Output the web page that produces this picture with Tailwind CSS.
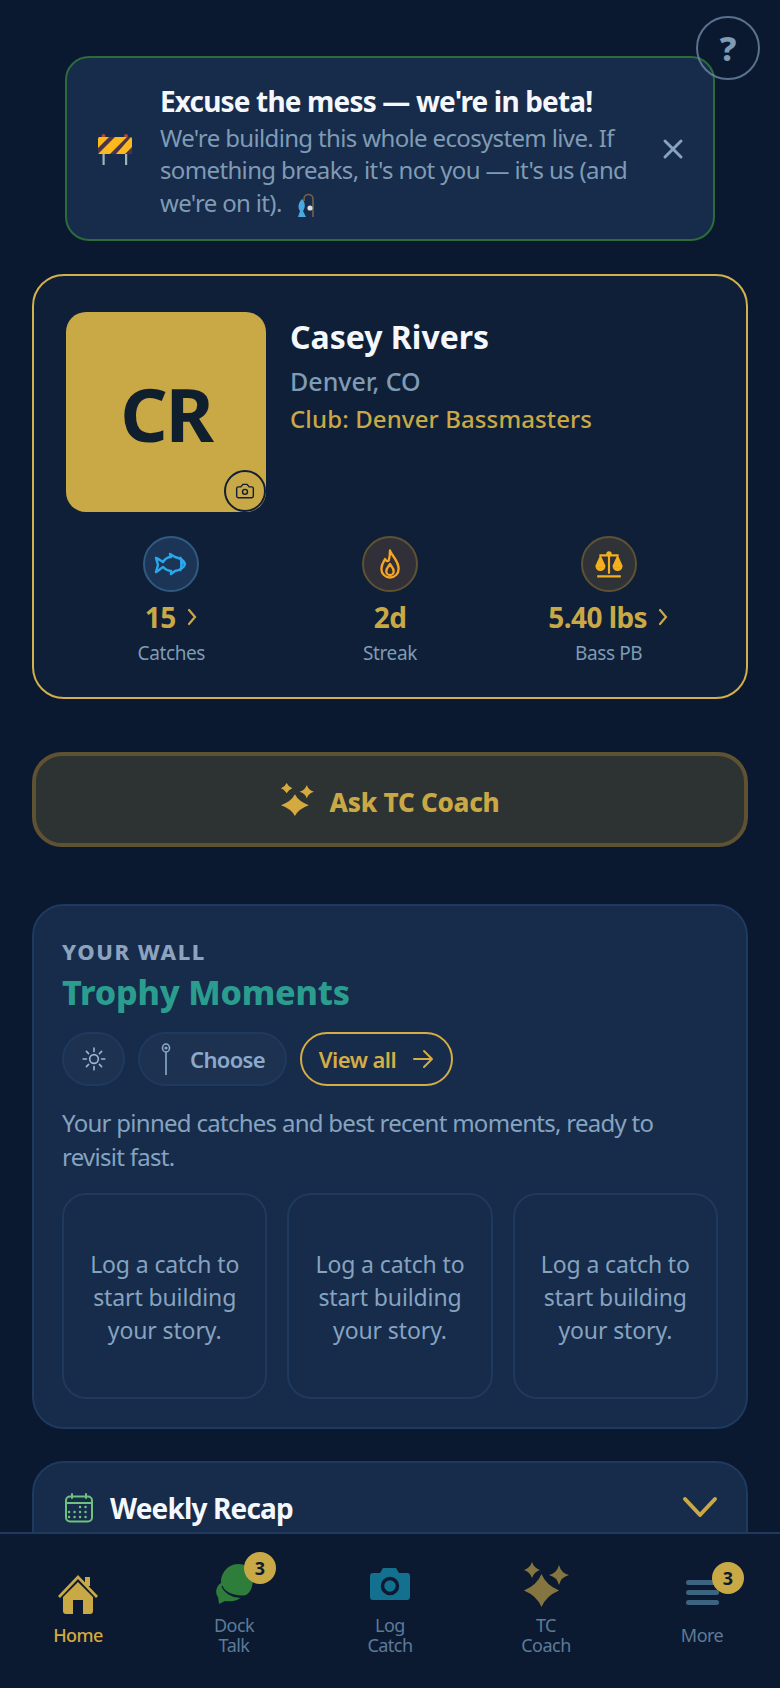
<!DOCTYPE html>
<html lang="en">
<head>
<meta charset="utf-8">
<script src="https://cdn.jsdelivr.net/npm/@tailwindcss/browser@4"></script>
</head>
<body class="bg-[#0a1930] font-['Noto_Sans',sans-serif]">
<div class="relative w-[780px] h-[1688px] overflow-hidden bg-[#0a1930]">
  <button class="absolute left-[696px] top-[16px] z-10 w-[64px] h-[64px] rounded-full border-2 border-[#6b8aa5]/80 flex items-center justify-center text-[34px] font-extrabold text-[#7f9bb5]">?</button>

  <main class="px-8 pt-14">
    <section class="mx-[33px] h-[185px] rounded-[24px] border-2 border-[#2e6b3a] bg-[#172b4a] flex items-center pl-[31px] pr-[28px]">
      <svg class="w-[34px] h-[32px] shrink-0" viewBox="0 0 34 32">
        <circle cx="5.500" cy="3" r="2" fill="#b5472a"/><circle cx="28" cy="3" r="2" fill="#b5472a"/>
        <rect x="4.500" y="18" width="2.200" height="14" fill="#9db4bf"/><rect x="27" y="18" width="2.200" height="14" fill="#9db4bf"/>
        <rect x="0" y="4" width="34" height="17" rx="1.500" fill="#fbb81f"/>
        <path d="M0 15 11 4h6L0 21zM12 21 29 4h4L18 21zM27 21l7-7v7z" fill="#4d3344"/>
      </svg>
      <div class="ml-[28px] flex-1 pt-[4px]">
        <h2 class="text-[28px] leading-[38px] font-bold text-[#f4f8fc] tracking-[-0.03em]">Excuse the mess — we're in beta!</h2>
        <p class="mt-[2px] text-[24px] leading-[32.500px] text-[#7f9bb5] tracking-[-0.027em]">We're building this whole ecosystem live. If something breaks, it's not you — it's us (and we're on it).<svg class="inline-block w-[18px] h-[24px] align-middle ml-[14px]" viewBox="0 0 18 24">
            <path d="M8 8V6c0-6 9-6 9 0v18" fill="none" stroke="#75604a" stroke-width="1.600"/>
            <path d="M6 6c3 3 4 8 1 12l3 6H2l2-6C1 14 3 9 6 6z" fill="#4aa8e0"/>
            <circle cx="14" cy="15" r="2.600" fill="#d8dfe0"/>
          </svg></p>
      </div>
      <svg class="w-[24px] h-[24px] shrink-0 ml-2" viewBox="0 0 24 24" fill="none" stroke="#87a3bd" stroke-width="3" stroke-linecap="round"><path d="M4 4l16 16M20 4 4 20"/></svg>
    </section>

    <section class="mt-[33px] h-[425px] rounded-[32px] border-2 border-[#d4b04c] bg-[#0e1f37] px-[32px] pt-[36px]">
      <div class="flex gap-6">
        <div class="relative w-[200px] h-[200px] rounded-[20px] bg-[#c9a846] flex items-center justify-center pt-[3px] text-[74px] font-bold text-[#0f1f2e] tracking-[-0.03em]">CR
          <span class="absolute right-0 bottom-0 w-[42px] h-[42px] rounded-full border-2 border-[#0f1f38] flex items-center justify-center">
            <svg class="w-[20px] h-[20px]" viewBox="0 0 24 24" fill="none" stroke="#0f1f38" stroke-width="1.700" stroke-linejoin="round"><path d="M14.500 4h-5L7 7H4a2 2 0 0 0-2 2v9a2 2 0 0 0 2 2h16a2 2 0 0 0 2-2V9a2 2 0 0 0-2-2h-3z"/><circle cx="12" cy="13" r="3"/></svg>
          </span>
        </div>
        <div class="pt-[3px]">
          <h1 class="text-[32px] leading-[44px] font-bold text-[#f4f8fc]">Casey Rivers</h1>
          <p class="mt-[3px] text-[25px] leading-[38px] font-medium text-[#7f9bb5]">Denver, CO</p>
          <p class="text-[24px] leading-[38px] text-[#c9a846] font-medium tracking-[0.005em]">Club: Denver Bassmasters</p>
        </div>
      </div>
      <div class="mt-[24px] grid grid-cols-3 gap-2">
        <div class="flex flex-col items-center">
          <span class="w-[56px] h-[56px] rounded-full bg-[#1c3557] border-2 border-[#2f5a80] flex items-center justify-center">
            <svg class="w-[34px] h-[34px]" viewBox="0 0 34 34" fill="none" stroke="#2aa8ec" stroke-width="2.400" stroke-linejoin="round"><path d="M2 11c3 1 5 3 7 4 2-3 5-5 8-5l-1-3 5 3c5 1 9 4 10 7-1 4-5 6-10 7l-4 3v-3c-3 0-6-2-8-4-2 1-4 4-7 5l2-7z"/><path d="M26 10c2 3 2 10 0 14"/><circle cx="28" cy="16" r="0.700" fill="#2aa8ec"/></svg>
          </span>
          <div class="mt-[7px] flex items-center h-[36px] text-[28px] font-bold text-[#c9a846] tracking-[-0.02em]">15
            <svg class="w-[12px] h-[20px] ml-[10px]" viewBox="0 0 12 20" fill="none" stroke="#c9a846" stroke-width="2.200" stroke-linecap="round"><path d="M3 3l6 7-6 7"/></svg>
          </div>
          <span class="mt-[5px] text-[19px] leading-[26px] text-[#7f9bb5] tracking-[-0.02em]">Catches</span>
        </div>
        <div class="flex flex-col items-center">
          <span class="w-[56px] h-[56px] rounded-full bg-[#312f38] border-2 border-[#5f5233] flex items-center justify-center">
            <svg class="w-[30px] h-[32px]" viewBox="0 0 24 26" fill="none" stroke="#f5a623" stroke-width="1.900" stroke-linejoin="round"><path d="M12 2c1 4 7 8 7 15a7 7 0 0 1-14 0c0-4 2-6 3-8 1 2 2 2 3 1 1-3 1-6 1-8z"/><path d="M12 13c1 2 3 3 3 6a3 3 0 0 1-6 0c0-3 2-4 3-6z"/></svg>
          </span>
          <div class="mt-[7px] flex items-center h-[36px] text-[28px] font-bold text-[#c9a846] tracking-[-0.02em]">2d</div>
          <span class="mt-[5px] text-[19px] leading-[26px] text-[#7f9bb5] tracking-[-0.02em]">Streak</span>
        </div>
        <div class="flex flex-col items-center">
          <span class="w-[56px] h-[56px] rounded-full bg-[#2f3236] border-2 border-[#5f5233] flex items-center justify-center">
            <svg class="w-[30px] h-[30px]" viewBox="0 0 28 28" fill="#f5b01f" stroke="#f5b01f" stroke-width="2" stroke-linejoin="round"><path d="M14 4v19M3 25.500h22M5 6h18" fill="none"/><circle cx="14" cy="4.500" r="1.500"/><path d="M6 7l-4 9h8zM22 7l-4 9h8z" stroke-width="1.500"/><path d="M2 17c1 4 7 4 8 0zM18 17c1 4 7 4 8 0z" stroke-width="1"/></svg>
          </span>
          <div class="mt-[7px] flex items-center h-[36px] text-[28px] font-bold text-[#c9a846] tracking-[-0.02em]">5.40 lbs
            <svg class="w-[12px] h-[20px] ml-[10px]" viewBox="0 0 12 20" fill="none" stroke="#c9a846" stroke-width="2.200" stroke-linecap="round"><path d="M3 3l6 7-6 7"/></svg>
          </div>
          <span class="mt-[5px] text-[19px] leading-[26px] text-[#7f9bb5] tracking-[-0.02em]">Bass PB</span>
        </div>
      </div>
    </section>

    <button class="mt-[53px] w-full h-[95px] rounded-[30px] border-4 border-[#5f5233] bg-[#2d3233] flex items-center justify-center gap-[16px] pt-[5px] text-[26px] font-extrabold text-[#c9a846] tracking-[-0.01em]">
      <svg class="w-[33px] h-[33px] -mt-[6px]" viewBox="0 0 32 32" fill="#d4a93f"><path d="M13.500 11Q17 18 27 21.500 17 25 13.500 32 10 25 0 21.500 10 18 13.500 11zM5.500 0Q7 3.500 11 5 7 6.500 5.500 10 4 6.500 0 5 4 3.500 5.500 0zM25 2Q26.500 7 32 8.500 26.500 10 25 15 23.500 10 18 8.500 23.500 7 25 2z"/></svg>
      Ask TC Coach
    </button>

    <section class="mt-[57px] h-[525px] rounded-[32px] border-2 border-[#1e3a5f] bg-[#172b4a] px-[28px] pt-[30px]">
      <p class="text-[22px] leading-[30px] font-extrabold tracking-[0.07em] text-[#8ca3c0]">YOUR WALL</p>
      <h2 class="mt-[5px] text-[34px] leading-[42px] font-extrabold text-[#2a9d8f] tracking-[-0.005em]">Trophy Moments</h2>
      <div class="mt-[19px] flex gap-[13px]">
        <button class="w-[63px] h-[54px] rounded-full bg-[#1c3250] border-2 border-[#1e3a5f] flex items-center justify-center">
          <svg class="w-[26px] h-[26px]" viewBox="0 0 24 24" fill="none" stroke="#9db4cf" stroke-width="1.500" stroke-linecap="round"><circle cx="12" cy="12" r="4"/><path d="M12 2v3M12 19v3M2 12h3M19 12h3M5 5l2 2M17 17l2 2M5 19l2-2M17 7l2-2"/></svg>
        </button>
        <button class="w-[149px] h-[54px] rounded-full bg-[#1c3250] border-2 border-[#1e3a5f] flex items-center justify-center gap-[18px] text-[22px] font-semibold text-[#8ca9cc] tracking-[-0.03em]">
          <svg class="w-[12px] h-[34px]" viewBox="0 0 12 34" fill="none" stroke="#8ca9cc" stroke-width="1.600"><ellipse cx="6" cy="6" rx="3.500" ry="4"/><circle cx="6" cy="6" r="0.800" fill="#8ca9cc"/><path d="M6 10v23"/></svg>
          Choose
        </button>
        <button class="w-[153px] h-[54px] rounded-full border-2 border-[#d4ad45] flex items-center justify-center gap-[16px] text-[22px] font-semibold text-[#d4ad45] tracking-[-0.025em]">
          View all
          <svg class="w-[22px] h-[22px]" viewBox="0 0 22 22" fill="none" stroke="#d4ad45" stroke-width="2" stroke-linecap="round" stroke-linejoin="round"><path d="M2 11h18M12 3l8 8-8 8"/></svg>
        </button>
      </div>
      <p class="mt-[20px] text-[24px] leading-[34px] text-[#86a3c0] tracking-[-0.03em]">Your pinned catches and best recent moments, ready to revisit fast.</p>
      <div class="mt-[19px] grid grid-cols-3 gap-[20px]">
        <div class="h-[206px] rounded-[24px] border-2 border-[#1f3a5c] flex items-center justify-center text-center px-[20px] pt-[2px] text-[23px] leading-[33px] text-[#86a3c0] tracking-[-0.005em]">Log a catch to start building your story.</div>
        <div class="h-[206px] rounded-[24px] border-2 border-[#1f3a5c] flex items-center justify-center text-center px-[20px] pt-[2px] text-[23px] leading-[33px] text-[#86a3c0] tracking-[-0.005em]">Log a catch to start building your story.</div>
        <div class="h-[206px] rounded-[24px] border-2 border-[#1f3a5c] flex items-center justify-center text-center px-[20px] pt-[2px] text-[23px] leading-[33px] text-[#86a3c0] tracking-[-0.005em]">Log a catch to start building your story.</div>
      </div>
    </section>

    <section class="mt-[32px] h-[200px] rounded-[32px] border-2 border-[#1e3a5f] bg-[#172b4a] pl-[31px] pr-[28px] pt-[27px]">
      <div class="flex items-center justify-between h-[36px]">
        <div class="flex items-center gap-[17px]">
          <svg class="w-[28px] h-[30px]" viewBox="0 0 28 30" fill="none" stroke="#6fc27d" stroke-width="2" stroke-linecap="round"><rect x="1" y="3.500" width="26" height="25" rx="4"/><path d="M7 1v4M21 1v4M1 10h26"/><g stroke-width="2.400" stroke-dasharray="0.100 5.400"><path d="M15 14h9M4 19h20M4 24h20"/></g></svg>
          <h2 class="text-[28px] font-bold text-[#f4f8fc] tracking-[-0.03em]">Weekly Recap</h2>
        </div>
        <svg class="w-[36px] h-[24px]" viewBox="0 0 36 24" fill="none" stroke="#c9a846" stroke-width="4" stroke-linecap="round" stroke-linejoin="round"><path d="M3 3l15 16L33 3"/></svg>
      </div>
    </section>
  </main>

  <nav class="absolute left-0 bottom-0 w-full h-[156px] border-t-2 border-[#1e3a5f] bg-[#0b1a30] grid grid-cols-5 pb-[3px]">
    <a class="flex flex-col items-center justify-center gap-[11px]">
      <span class="h-[40px] w-[44px] flex items-center justify-center">
        <svg class="w-[42px] h-[40px]" viewBox="0 0 42 40"><path d="M28 3h5v9h-5z" fill="#c9a846"/><path d="M21 1 1 22l2 2L21 5l18 19 2-2z" fill="#c9a846"/><path d="M21 8 6 23v14a3 3 0 0 0 3 3h7V26h10v14h7a3 3 0 0 0 3-3V23z" fill="#c9a846"/></svg>
      </span>
      <span class="text-[18px] leading-[20px] font-medium text-[#d4a93f] tracking-[-0.03em]">Home</span>
    </a>
    <a class="flex flex-col items-center justify-center gap-[11px]">
      <span class="relative h-[40px] w-[44px] flex items-center justify-center">
        <svg class="w-[38px] h-[40px]" viewBox="0 0 38 40" fill="#2e7d3a"><path d="M8 18C2 20-1 28 3 33l1 7 6-3c6 1 13 0 16-4C18 33 8 28 8 18z" /><path d="M23 0c9 0 15 6 15 14s-2 14-7 17c-9 2-20-2-24-9C3 12 12 0 23 0z"/><path d="M7 22c2 6 11 12 19 11" fill="none" stroke="#0b1a30" stroke-width="1.200"/></svg>
        <span class="absolute left-[32px] top-[-12px] w-[32px] h-[32px] rounded-full bg-[#c9a846] flex items-center justify-center text-[18px] font-bold text-[#0b1a30]">3</span>
      </span>
      <span class="text-center text-[18px] leading-[20px] text-[#5d7a9a] tracking-[-0.03em]">Dock<br>Talk</span>
    </a>
    <a class="flex flex-col items-center justify-center gap-[11px]">
      <span class="h-[40px] w-[44px] flex items-center justify-center">
        <svg class="w-[40px] h-[32px]" viewBox="0 0 40 32"><path d="M13 0h13l3 5h8a3 3 0 0 1 3 3v21a3 3 0 0 1-3 3H3a3 3 0 0 1-3-3V8a3 3 0 0 1 3-3h7z" fill="#14708f"/><circle cx="20" cy="18" r="7.500" fill="#14708f" stroke="#0b1a30" stroke-width="3.500"/></svg>
      </span>
      <span class="text-center text-[18px] leading-[20px] text-[#5d7a9a] tracking-[-0.03em]">Log<br>Catch</span>
    </a>
    <a class="flex flex-col items-center justify-center gap-[11px]">
      <span class="h-[40px] w-[46px] flex items-center justify-center">
        <svg class="w-[45px] h-[45px]" viewBox="0 0 45 45" fill="#857540"><path d="M17.500 12Q22 23 35 28.500 22 34 17.500 45 13 34 0 28.500 13 23 17.500 12zM8 0Q10 6 16 8 10 10 8 16 6 10 0 8 6 6 8 0zM35 3Q37 11 45 13 37 15 35 23 33 15 25 13 33 11 35 3z"/></svg>
      </span>
      <span class="text-center text-[18px] leading-[20px] text-[#5d7a9a] tracking-[-0.03em]">TC<br>Coach</span>
    </a>
    <a class="flex flex-col items-center justify-center gap-[11px]">
      <span class="relative h-[40px] w-[44px] flex flex-col items-center justify-center gap-[5px] pb-[4px]">
        <span class="block w-[33px] h-[5px] rounded-full bg-[#3c6480]"></span>
        <span class="block w-[33px] h-[5px] rounded-full bg-[#3c6480]"></span>
        <span class="block w-[33px] h-[5px] rounded-full bg-[#3c6480]"></span>
        <span class="absolute left-[32px] top-[-12px] w-[32px] h-[32px] rounded-full bg-[#c9a846] flex items-center justify-center text-[18px] font-bold text-[#0b1a30]">3</span>
      </span>
      <span class="text-[18px] leading-[20px] text-[#5d7a9a] tracking-[-0.03em]">More</span>
    </a>
  </nav>
</div>
</body>
</html>
